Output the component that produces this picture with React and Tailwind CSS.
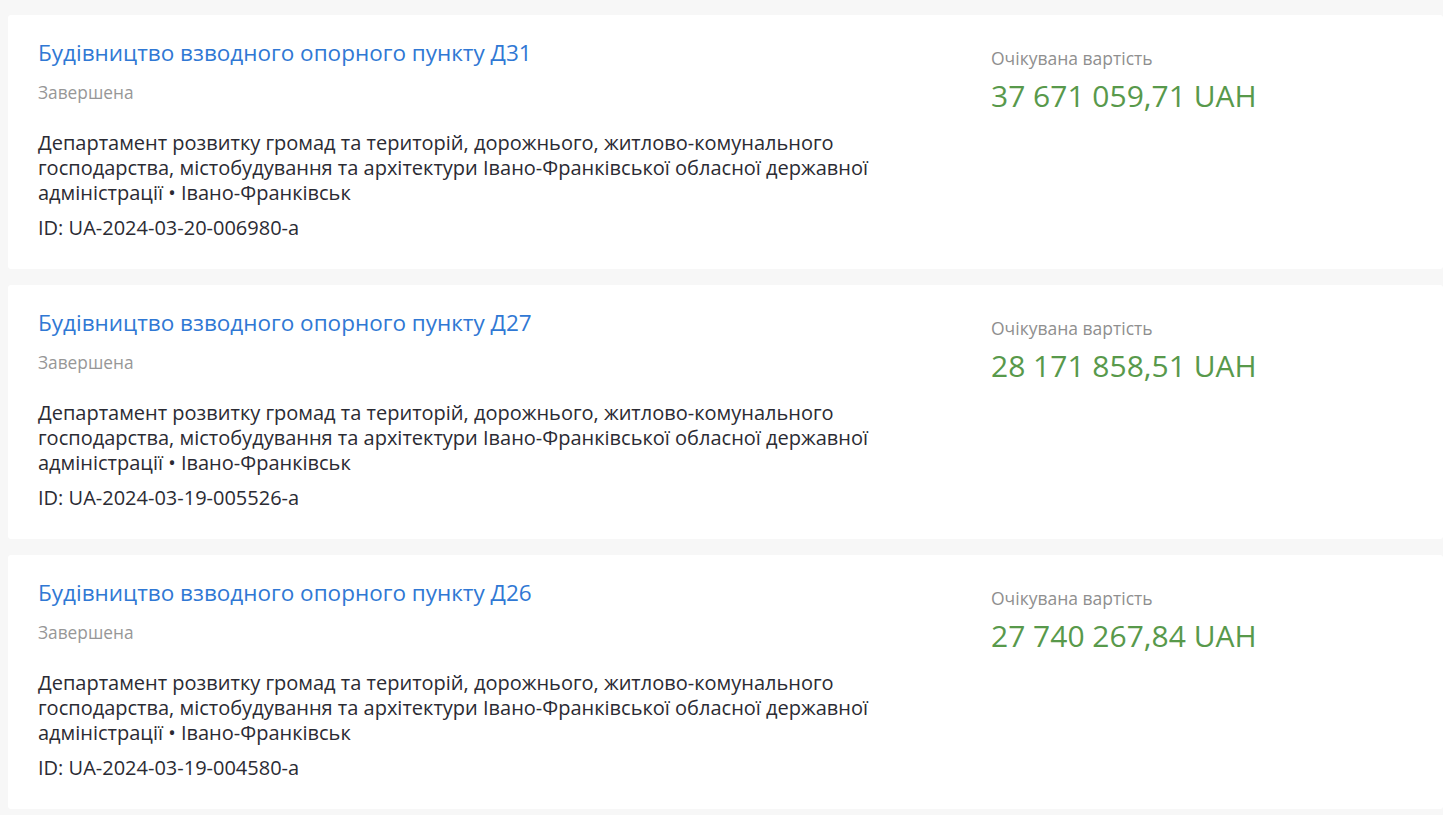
import React from "react";

const items = [
  { title: "Будівництво взводного опорного пункту Д31", price: "37 671 059,71 UAH", id: "UA-2024-03-20-006980-a" },
  { title: "Будівництво взводного опорного пункту Д27", price: "28 171 858,51 UAH", id: "UA-2024-03-19-005526-a" },
  { title: "Будівництво взводного опорного пункту Д26", price: "27 740 267,84 UAH", id: "UA-2024-03-19-004580-a" },
];

function Card({ item }) {
  return (
    <div className="flex bg-white rounded-[3px] h-[254px] pl-[30px] pt-[23px]">
      <div className="w-[953px] pr-[70px] shrink-0">
        <a className="block text-[22.5px] leading-[30px] text-[#3078d4]">{item.title}</a>
        <div className="mt-[13px] text-[17.3px] leading-[24px] text-[#979797]">Завершена</div>
        <div className="mt-[25px] text-[20px] leading-[25px] text-[#2b2b33]">
          Департамент розвитку громад та територій, дорожнього, житлово-комунального господарства, містобудування та архітектури Івано-Франківської обласної державної адміністрації • Івано-Франківськ
        </div>
        <div className="mt-[10px] text-[20px] leading-[25px] text-[#2b2b33]">ID: {item.id}</div>
      </div>
      <div className="pt-[8px]">
        <div className="text-[17.5px] leading-[24px] text-[#8f8f8f]">Очікувана вартість</div>
        <div className="mt-[7px] text-[30px] leading-[38px] text-[#58994b]">{item.price}</div>
      </div>
    </div>
  );
}

export default function App() {
  return (
    <div className="min-h-[815px] bg-[#f7f7f7] pl-2 pt-[15px] overflow-hidden" style={{ fontFamily: '"Open Sans", sans-serif' }}>
      <div className="flex flex-col gap-4">
        {items.map((it) => (
          <Card key={it.id} item={it} />
        ))}
      </div>
    </div>
  );
}
